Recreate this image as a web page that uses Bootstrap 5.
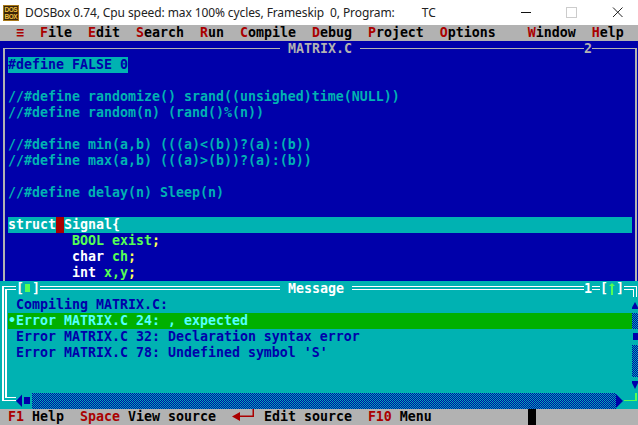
<!DOCTYPE html>
<html lang="en">
<head>
<meta charset="utf-8">
<title>DOSBox Turbo C</title>
<link href="https://cdn.jsdelivr.net/npm/bootstrap@5.3.0/dist/css/bootstrap.min.css" rel="stylesheet">
<style>
:root{--d-blue:#0000aa;--d-teal:#00b2b2;--d-gray:#b2b2b2;--d-red:#aa0000;--d-green:#00b000;--d-lime:#55ff55;--d-yellow:#ffff55;--d-cyan:#55ffff;}
html,body{margin:0;background:#fff;overflow:hidden;}
.shell{width:638px;height:425px;}
.titlebar{height:25px;background:#fff;font:12px/25px "Noto Sans",sans-serif;color:#222;padding-left:3px;}
.appicon{width:16px;height:16px;margin-top:5px;margin-right:6px;flex:none;}
.titletext{white-space:pre;letter-spacing:-.1px;}
.wincontrols{margin-left:auto;}
.dos{font:bold 13.29px/16px "DejaVu Sans Mono",monospace;}
.tline{height:16px;white-space:pre;overflow:hidden;}
.frameicon{display:block;}
.menubar{background:var(--d-gray);color:#000;}
.statusbar{background:var(--d-gray);color:#000;}
.hot{color:var(--d-red);}
.blk{display:inline-block;background:#000;width:8px;height:16px;vertical-align:top;}
.inl{display:inline-block;vertical-align:top;}
.editor{background:var(--d-blue);color:var(--d-gray);}
.hrule{height:16px;background:linear-gradient(var(--d-gray),var(--d-gray)) 0 7px/100% 1px no-repeat;}
.gut-ed{width:8px;flex:none;background:linear-gradient(var(--d-gray),var(--d-gray)) 3px 0/2px 100% no-repeat;}
.gut-edr{width:6px;flex:none;background:linear-gradient(var(--d-gray),var(--d-gray)) 3px 0/2px 100% no-repeat;}
.code{color:var(--d-teal);}
.hl-define{background:var(--d-teal);color:var(--d-blue);display:inline-block;}
.hl-line{background:var(--d-teal);color:#fff;}
.cursor{background:var(--d-red);display:inline-block;width:8px;}
.w{color:#fff;}.lime{color:var(--d-lime);}.yel{color:var(--d-yellow);}
.msgwin{background:var(--d-teal);color:#fff;}
.dbl{height:16px;background:linear-gradient(#fff,#fff) 0 5px/100% 1px no-repeat,linear-gradient(#fff,#fff) 0 8px/100% 1px no-repeat;}
.gut-msg{width:8px;flex:none;background:linear-gradient(#fff,#fff) 2px 0/2px 100% no-repeat,linear-gradient(#fff,#fff) 5px 0/2px 100% no-repeat;}
.gut-msr{width:6px;flex:none;}
.msgtext{color:var(--d-blue);}
.sel{background:var(--d-green);color:var(--d-cyan);}
.dither{background:#00b2b2 url("data:image/svg+xml,%3Csvg xmlns='http://www.w3.org/2000/svg' width='2' height='2' shape-rendering='crispEdges'%3E%3Crect width='1' height='1' fill='%230000aa'/%3E%3Crect x='1' y='1' width='1' height='1' fill='%230000aa'/%3E%3C/svg%3E") 0 0/2px 2px;}
.cell{height:16px;}
.cw8{width:8px;flex:none;}
.cw6{width:6px;flex:none;}
.r272{width:272px;flex:none;}
.r224{width:224px;flex:none;}
.r240{width:240px;flex:none;}
.r232{width:232px;flex:none;}
</style>
</head>
<body>
<div class="shell d-flex flex-column overflow-hidden">
  <div class="titlebar d-flex">
    <svg class="appicon" viewBox="0 0 16 16"><rect width="16" height="16" fill="#3a2408"/><rect x=".5" y=".5" width="15" height="15" fill="none" stroke="#a87818"/><text x="8" y="7" font-family="Liberation Sans" font-weight="700" font-size="6.5" text-anchor="middle" textLength="13" fill="#f0c040">DOS</text><text x="8" y="14" font-family="Liberation Sans" font-weight="700" font-size="6.5" text-anchor="middle" textLength="13" fill="#f0c040">BOX</text></svg>
    <span class="titletext">DOSBox 0.74, Cpu speed: max 100% cycles, Frameskip  0, Program:         TC</span>
    <svg class="wincontrols" width="117" height="25" viewBox="521 0 117 25"><path d="M521 12.500h10" stroke="#111"/><rect x="566.500" y="7.500" width="10" height="10" fill="none" stroke="#ccc"/><path d="M613 7.500l9.500 9.500M622.500 7.500l-9.500 9.500" stroke="#222" fill="none"/></svg>
  </div>
  <div class="dos d-flex flex-column flex-grow-1">
    <div class="tline menubar">  <span class="hot">≡</span>  <span class="hot">F</span>ile  <span class="hot">E</span>dit  <span class="hot">S</span>earch  <span class="hot">R</span>un  <span class="hot">C</span>ompile  <span class="hot">D</span>ebug  <span class="hot">P</span>roject  <span class="hot">O</span>ptions    <span class="hot">W</span>indow  <span class="hot">H</span>elp</div>

    <div class="editor">
      <div class="d-flex tline">
        <svg class="cw8 frameicon" width="8" height="16"><rect x="3" y="7" width="5" height="1" fill="#b2b2b2"/><rect x="3" y="7" width="2" height="9" fill="#b2b2b2"/></svg>
        <div class="hrule r272"></div><span> MATRIX.C </span><div class="hrule r224"></div><span>2</span><div class="hrule flex-grow-1"></div>
        <svg class="cw6 frameicon" width="6" height="16"><rect x="0" y="7" width="5" height="1" fill="#b2b2b2"/><rect x="3" y="7" width="2" height="9" fill="#b2b2b2"/></svg>
      </div>
      <div class="d-flex">
        <div class="gut-ed"></div>
        <div class="flex-grow-1 code">
          <div class="tline"><span class="hl-define">#define FALSE 0</span></div>
          <div class="tline"> </div>
          <div class="tline">//#define randomize() srand((unsighed)time(NULL))</div>
          <div class="tline">//#define random(n) (rand()%(n))</div>
          <div class="tline"> </div>
          <div class="tline">//#define min(a,b) (((a)&lt;(b))?(a):(b))</div>
          <div class="tline">//#define max(a,b) (((a)&gt;(b))?(a):(b))</div>
          <div class="tline"> </div>
          <div class="tline">//#define delay(n) Sleep(n)</div>
          <div class="tline"> </div>
          <div class="tline hl-line">struct<span class="cursor"> </span>Signal{</div>
          <div class="tline">        <span class="lime">BOOL exist</span><span class="yel">;</span></div>
          <div class="tline">        <span class="w">char</span> <span class="lime">ch</span><span class="yel">;</span></div>
          <div class="tline">        <span class="w">int</span> <span class="lime">x,y</span><span class="yel">;</span></div>
        </div>
        <div class="gut-edr"></div>
      </div>
    </div>

    <div class="msgwin">
      <div class="d-flex tline">
        <svg class="flex-shrink-0 frameicon" width="16" height="16"><path d="M2 5h14v1H4v10H2zM5 8h11v1H7v7H5z" fill="#fff"/></svg>
        <span>[</span><svg class="cw8 frameicon" width="8" height="16"><rect x="1" y="3" width="5" height="8" fill="#55ff55"/></svg><span>]</span>
        <div class="dbl r240"></div><span> Message </span><div class="dbl r232"></div>
        <span>1</span><div class="dbl cw8"></div><span>[</span>
        <svg class="cw8 frameicon" width="8" height="16"><path d="M3 14V5H1l3-3 3 3H5v9z" fill="#55ff55"/></svg>
        <span>]</span>
        <svg class="flex-shrink-0 frameicon" width="14" height="16"><path d="M0 5h13v11h-1V6H0zM0 8h10v8H9V9H0z" fill="#fff"/></svg>
      </div>
      <div class="d-flex">
        <div class="gut-msg"></div>
        <div class="flex-grow-1 msgtext">
          <div class="tline"> Compiling MATRIX.C:</div>
          <div class="tline sel">•Error MATRIX.C 24: , expected</div>
          <div class="tline"> Error MATRIX.C 32: Declaration syntax error</div>
          <div class="tline"> Error MATRIX.C 78: Undefined symbol 'S'</div>
          <div class="tline"> </div>
          <div class="tline"> </div>
        </div>
        <div class="gut-msr d-flex flex-column">
          <div class="cell"><svg class="frameicon" width="6" height="16"><path d="M0 12h6V10.500L3 5 0 10.500z" fill="#0000aa"/></svg></div>
          <div class="cell dither"></div>
          <div class="cell"><svg class="frameicon" width="6" height="16"><rect x="1" y="4" width="5" height="7" fill="#0000aa"/></svg></div>
          <div class="cell dither"></div>
          <div class="cell dither"></div>
          <div class="cell"><svg class="frameicon" width="6" height="16"><path d="M0 4h6v2l-3 6-3-6z" fill="#0000aa"/></svg></div>
        </div>
      </div>
      <div class="d-flex tline">
        <svg class="flex-shrink-0 frameicon" width="16" height="16"><path d="M2 0h2v7h12v1H2zM5 0h2v4h9v1H5z" fill="#fff"/></svg>
        <svg class="cw8 frameicon" width="8" height="16"><path d="M0 8l6-6.500V14z" fill="#0000aa"/></svg>
        <svg class="cw8 frameicon" width="8" height="16"><rect x="0" y="4" width="6" height="7" fill="#0000aa"/></svg>
        <div class="dither flex-grow-1"></div>
        <svg class="cw8 frameicon" width="8" height="16"><path d="M0 1v14l7-7z" fill="#0000aa"/></svg>
        <svg class="flex-shrink-0 frameicon" width="14" height="16"><path d="M0 7h11V0h2v8H0z" fill="#55ff55"/></svg>
      </div>
    </div>

    <div class="tline statusbar"> <span class="hot">F1</span> Help  <span class="hot">Space</span> View source  <svg class="inl" width="24" height="16"><path d="M8 3l-8 4.500L8 12V8h14V0h-1.500v6.500H8z" fill="#aa0000"/></svg> Edit source  <span class="hot">F10</span> Menu            <span class="blk"></span></div>
  </div>
</div>
<script src="https://cdn.jsdelivr.net/npm/bootstrap@5.3.0/dist/js/bootstrap.bundle.min.js"></script>
</body>
</html>
